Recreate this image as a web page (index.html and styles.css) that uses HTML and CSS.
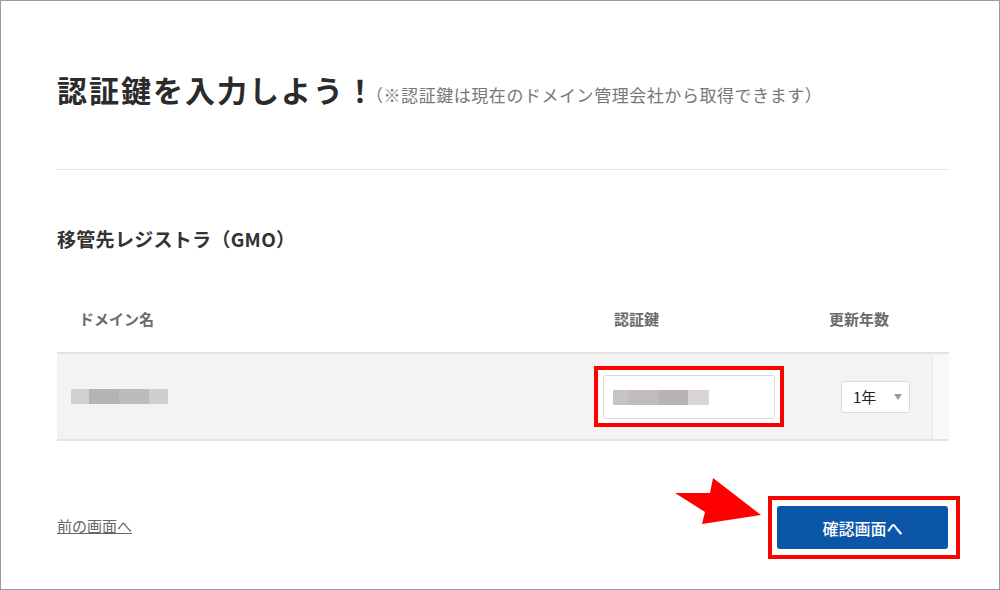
FILE: index.html
```html
<!DOCTYPE html>
<html lang="ja">
<head>
<meta charset="utf-8">
<title>認証鍵を入力しよう！</title>
<link rel="stylesheet" href="styles.css">
</head>
<body>
<div class="page">
  <div class="title-row">
    <h1 class="title">認証鍵を入力しよう！</h1><span class="note">（※認証鍵は現在のドメイン管理会社から取得できます）</span>
  </div>
  <hr class="divider">
  <h2 class="section-title">移管先レジストラ（GMO）</h2>

  <div class="table">
    <div class="th th-domain">ドメイン名</div>
    <div class="th th-key">認証鍵</div>
    <div class="th th-years">更新年数</div>
    <div class="th th-pad"></div>

    <div class="td td-domain">
      <span class="blur">
        <span class="px px-a1"></span><span class="px px-a2"></span><span class="px px-a3"></span><span class="px px-a4"></span>
      </span>
    </div>
    <div class="td td-key">
      <div class="mark mark-input">
        <div class="input">
          <span class="blur">
            <span class="px px-b1"></span><span class="px px-b2"></span><span class="px px-b3"></span><span class="px px-b4"></span>
          </span>
        </div>
      </div>
    </div>
    <div class="td td-years">
      <div class="select"><span class="select-value">1年</span><span class="caret"></span></div>
    </div>
    <div class="td td-pad"></div>
  </div>

  <div class="footer">
    <a class="back-link" href="#">前の画面へ</a>
    <div class="mark mark-button">
      <button class="confirm" type="button">確認画面へ</button>
    </div>
  </div>

  <svg class="arrow" width="96" height="54" viewBox="0 0 96 54" aria-hidden="true">
    <polygon points="5,19 40,19 43,4 91,41 32,50 35,38" fill="#ff0000"/>
  </svg>
</div>
</body>
</html>
```

FILE: styles.css
```css
* { box-sizing: border-box; }

html, body {
  margin: 0;
  padding: 0;
  background: #ffffff;
}

body {
  font-family: "Noto Sans CJK JP", "Liberation Sans", sans-serif;
  color: #333333;
}

.page {
  position: relative;
  width: 1000px;
  height: 590px;
  border: 1px solid #9b9b9b;
  padding: 68px 50px 0 56px;
  overflow: hidden;
}

.title-row {
  display: flex;
  align-items: baseline;
  white-space: nowrap;
}

.title {
  margin: 0;
  font-size: 30px;
  line-height: 40px;
  font-weight: 700;
  color: #2b2b2b;
  letter-spacing: 2px;
}

.note {
  font-size: 17px;
  color: #777777;
  margin-left: -11px;
  letter-spacing: 0.55px;
}

.divider {
  margin: 60px 0 0;
  border: 0;
  border-top: 1px solid #e6e6e6;
  height: 0;
}

.section-title {
  margin: 56px 0 0;
  font-size: 19px;
  line-height: 26px;
  font-weight: 700;
  color: #333333;
  letter-spacing: 0.3px;
}

.table {
  margin-top: 38px;
  display: grid;
  grid-template-columns: 1fr 210px 131px 17px;
}

.th {
  padding: 19px 0 23px;
  font-size: 15px;
  line-height: 20px;
  font-weight: 700;
  color: #6b6b6b;
}

.th-domain { padding-left: 22px; }
.th-key { padding-left: 23px; }
.th-years { padding-left: 28px; }

.td {
  background: #f3f3f3;
  border-top: 2px solid #e3e3e3;
  border-bottom: 2px solid #e3e3e3;
  height: 89px;
  display: flex;
  align-items: center;
}

.td-domain { padding-left: 14px; }
.td-key { padding-left: 3px; }
.td-years { padding-left: 40px; }
.td-pad {
  background: #f8f8f8;
  border-left: 1px solid #e6e6e6;
}

.blur {
  display: inline-flex;
  height: 15px;
}

.px { display: block; height: 100%; }
.px-a1 { width: 18px; background: #d0d0d0; }
.px-a2 { width: 30px; background: #b4b4b4; }
.px-a3 { width: 30px; background: #bcbcbc; }
.px-a4 { width: 19px; background: #cfcfcf; }

.px-b1 { width: 15px; background: #c9c4c4; }
.px-b2 { width: 30px; background: #c2bcbc; }
.px-b3 { width: 30px; background: #b9b3b3; }
.px-b4 { width: 21px; background: #d9d5d5; }

.mark {
  border: 4px solid #ff0000;
  background: #ffffff;
}

.mark-input {
  padding: 5px 5px 4px 5px;
}

.input {
  width: 172px;
  height: 44px;
  background: #ffffff;
  border: 1px solid #d9d9d9;
  border-radius: 3px;
  display: flex;
  align-items: center;
  padding-left: 9px;
}

.select {
  width: 69px;
  height: 32px;
  background: #ffffff;
  border: 1px solid #d9d9d9;
  border-radius: 3px;
  display: flex;
  align-items: center;
  padding-left: 11px;
}

.select-value {
  font-size: 15px;
  color: #222222;
  line-height: 20px;
}

.caret {
  margin-left: 18px;
  width: 0;
  height: 0;
  border-left: 4.5px solid transparent;
  border-right: 4.5px solid transparent;
  border-top: 6px solid #9a9a9a;
}

.footer {
  margin-top: 55px;
  display: flex;
  justify-content: space-between;
  align-items: center;
  margin-right: -11px;
}

.back-link {
  font-size: 15px;
  line-height: 20px;
  color: #666666;
  text-decoration: underline;
  margin-top: -4px;
}

.mark-button {
  padding: 6px 8px 6px 5px;
}

.confirm {
  display: block;
  width: 171px;
  height: 43px;
  border: 0;
  border-radius: 3px;
  background: #0b56a7;
  color: #ffffff;
  font-family: "Noto Sans CJK JP", "Liberation Sans", sans-serif;
  font-size: 16px;
  font-weight: 500;
  padding: 0;
}

.arrow {
  position: absolute;
  left: 669px;
  top: 473px;
}
```
